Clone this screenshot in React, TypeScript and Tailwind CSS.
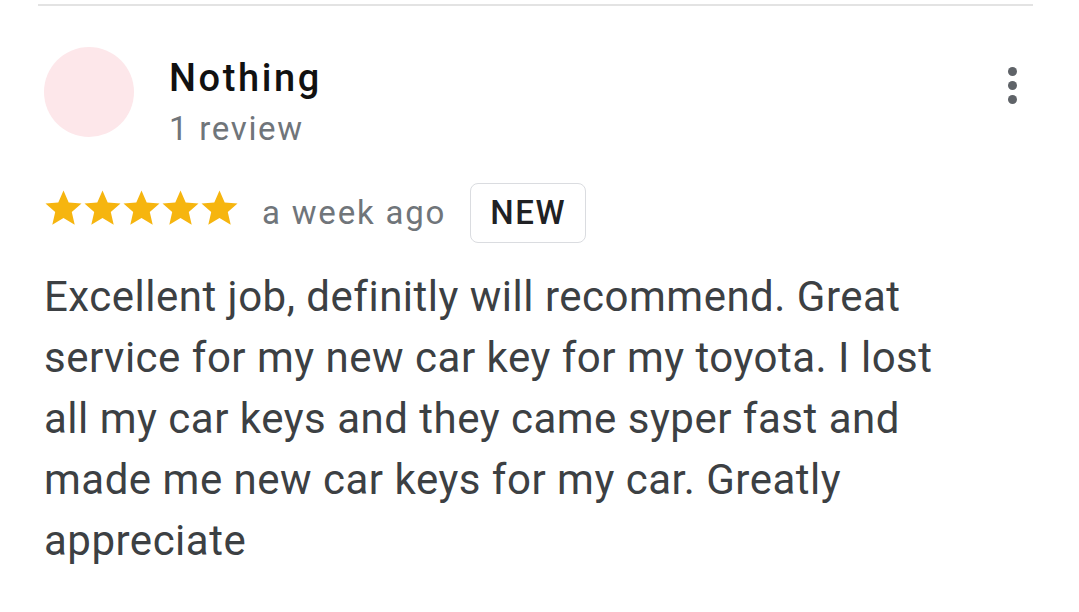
import React from "react";

function Star() {
  return (
    <svg width="39" height="38" viewBox="0 0 24 23.4" className="block">
      <path
        d="M12 1l3.2 7.3 7.9.7-6 5.2 1.8 7.8L12 17.9l-6.9 4.1 1.8-7.8-6-5.2 7.9-.7z"
        fill="#f6b50f"
      />
    </svg>
  );
}

export default function App() {
  return (
    <div
      className="w-[1079px] h-[612px] bg-white overflow-hidden relative"
      style={{ fontFamily: "Roboto, 'Noto Sans', sans-serif" }}
    >
      <div className="ml-[38px] mr-[46px] mt-[4px] h-[2px] bg-[#e3e3e3]" />
      <div className="flex items-start pl-[44px] pr-[62px] pt-[41px]">
        <div className="w-[90px] h-[90px] rounded-full bg-[#fde7ea] shrink-0" />
        <div className="ml-[35px] flex flex-col">
          <div className="text-[38px] leading-[44px] font-medium text-[#111] tracking-[2.6px] mt-[9px]">Nothing</div>
          <div className="text-[33px] leading-[40px] text-[#70757a] tracking-[1.7px] mt-[9px]">1 review</div>
        </div>
        <div className="ml-auto mt-[20px] flex flex-col items-center gap-[5px]">
          <div className="w-[9px] h-[9px] rounded-full bg-[#5f6368]" />
          <div className="w-[9px] h-[9px] rounded-full bg-[#5f6368]" />
          <div className="w-[9px] h-[9px] rounded-full bg-[#5f6368]" />
        </div>
      </div>
      <div className="flex items-center pl-[44px] mt-[34px]">
        <div className="flex items-center mb-[11px]">
          <Star />
          <Star />
          <Star />
          <Star />
          <Star />
        </div>
        <div className="ml-[23px] text-[33px] leading-[40px] text-[#70757a] tracking-[1.8px]">a week ago</div>
        <div className="ml-[24px] h-[60px] w-[116px] rounded-[8px] border-[1.5px] border-[#dadce0] flex items-center justify-center text-[33px] font-medium text-[#202124] tracking-[1.5px]">
          NEW
        </div>
      </div>
      <div className="pl-[44px] mt-[23px] w-[1000px] text-[42px] leading-[61px] text-[#3c4043] tracking-[0.5px]">
        Excellent job, definitly will recommend. Great<br />
        service for my new car key for my toyota. I lost<br />
        all my car keys and they came syper fast and<br />
        made me new car keys for my car. Greatly<br />
        appreciate
      </div>
    </div>
  );
}
